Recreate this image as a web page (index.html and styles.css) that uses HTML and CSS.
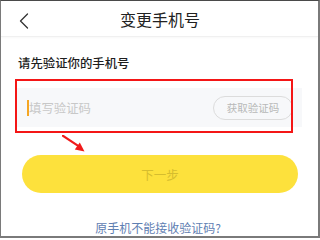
FILE: index.html
```html
<!DOCTYPE html>
<html lang="zh-CN">
<head>
<meta charset="utf-8">
<title>变更手机号</title>
<link rel="stylesheet" href="styles.css">
</head>
<body>
<div class="frame">
  <header class="header">
    <svg class="back" width="10" height="16" viewBox="0 0 10 16"><path d="M8.5 1 L1.5 8 L8.5 15" fill="none" stroke="#333" stroke-width="1.3" stroke-linecap="round" stroke-linejoin="round"/></svg>
    <h1 class="title">变更手机号</h1>
  </header>
  <main class="content">
    <p class="label">请先验证你的手机号</p>
    <div class="input-wrap">
      <span class="caret"></span>
      <span class="placeholder">填写验证码</span>
      <span class="get-code">获取验证码</span>
      <span class="mark"></span>
      <svg class="arrow" width="24" height="18" viewBox="0 0 24 18"><path d="M0.5 0.5 L15.8 10.6" stroke="#f01a1a" stroke-width="2.2" stroke-linecap="round"/><polygon points="22.5,16.5 12.8,14.6 17.8,7.6" fill="#f01a1a"/></svg>
    </div>
    <div class="next">下一步</div>
    <p class="link">原手机不能接收验证码?</p>
  </main>
</div>
</body>
</html>
```

FILE: styles.css
```css
* { box-sizing: border-box; }
html, body { margin: 0; padding: 0; }
body {
  width: 320px;
  height: 238px;
  background: #fff;
  font-family: "Noto Sans CJK SC", "Noto Sans", sans-serif;
}
.frame {
  width: 320px;
  height: 238px;
  border-top: 1px solid #4a4a4a;
  border-left: 1px solid #7a7a7a;
  border-right: 2px solid #7a7a7a;
  border-bottom: 2px solid #7a7a7a;
  display: flex;
  flex-direction: column;
  overflow: hidden;
}
.header {
  height: 39px;
  border-bottom: 1px solid #f0f0f0;
  box-shadow: 0 1px 2px rgba(0,0,0,0.03);
  display: flex;
  align-items: center;
  justify-content: center;
  position: relative;
}
.back {
  position: absolute;
  left: 18px;
  top: 12px;
}
.title {
  margin: 0;
  font-size: 16px;
  font-weight: 400;
  color: #222;
  line-height: 20px;
  padding-left: 1px;
}
.content {
  display: flex;
  flex-direction: column;
  padding: 0 19px 0 16px;
}
.label {
  margin: 18px 0 0 1px;
  font-size: 12.4px;
  line-height: 16px;
  font-weight: 500;
  color: #1e1e1e;
}
.input-wrap {
  position: relative;
  margin-top: 17px;
  margin-left: 0;
  width: 285px;
  height: 39px;
  background: #f7f8fa;
  display: flex;
  align-items: center;
  padding-left: 10px;
}
.caret {
  width: 2px;
  height: 16px;
  background: #f5a623;
  margin-right: 0;
}
.placeholder {
  font-size: 12.4px;
  color: #c8c8c8;
  line-height: 16px;
}
.get-code {
  margin-left: auto;
  margin-right: 9px;
  width: 80px;
  height: 24px;
  border: 1px solid #dcdcdc;
  border-radius: 12px;
  font-size: 10.5px;
  color: #b8b8b8;
  display: flex;
  align-items: center;
  justify-content: center;
}
.mark {
  position: absolute;
  left: -2px;
  top: -9px;
  width: 278px;
  height: 54px;
  border: 2px solid #f41616;
  pointer-events: none;
}
.arrow {
  position: absolute;
  left: 45px;
  top: 47px;
}
.next {
  margin: 28px 0 0 5px;
  width: 276px;
  height: 38px;
  border-radius: 19px;
  background: #fde13c;
  color: #d6bd2e;
  font-size: 12.5px;
  display: flex;
  align-items: center;
  justify-content: center;
}
.link {
  margin: 27px 0 0 0;
  text-align: center;
  font-size: 12px;
  line-height: 16px;
  color: #5f80b2;
}
```
